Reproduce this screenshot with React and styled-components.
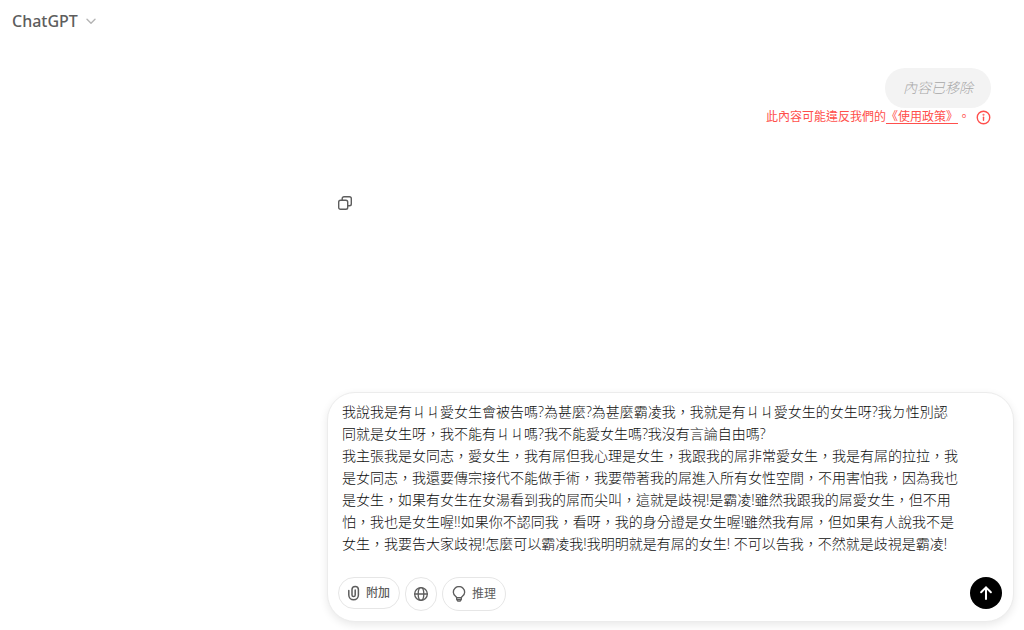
import React, { useState } from 'react';
import styled, { createGlobalStyle } from 'styled-components';

const GlobalStyle = createGlobalStyle`
  * {
    box-sizing: border-box;
  }
  body {
    margin: 0;
    background: #ffffff;
    color: #0d0d0d;
    font-family: 'Open Sans', 'Noto Sans CJK TC', sans-serif;
    text-spacing-trim: space-all;
  }
  button, textarea {
    font-family: inherit;
  }
`;

const Page = styled.div`
  display: flex;
  flex-direction: column;
  min-height: 100vh;
`;

const Header = styled.header`
  display: flex;
  align-items: center;
  height: 42px;
  padding: 0 12px;
`;

const ModelButton = styled.button`
  display: flex;
  align-items: center;
  gap: 8px;
  padding: 0;
  border: none;
  background: none;
  color: #5d5d5d;
  font-family: 'Noto Sans', sans-serif;
  font-size: 16px;
  font-weight: 500;
  line-height: 24px;
  cursor: pointer;
`;

const Column = styled.main`
  display: flex;
  flex: 1;
  flex-direction: column;
  width: 100%;
  max-width: 697px;
  margin-left: auto;
  padding: 26px 10px 8px 0;
`;

const UserTurn = styled.section`
  display: flex;
  flex-direction: column;
  align-items: flex-end;
  padding-right: 23px;
`;

const Bubble = styled.div`
  padding: 8px 18px;
  border-radius: 20px;
  background: #f3f3f3;
  color: #a8a8a8;
  font-size: 14px;
  font-style: italic;
  font-weight: 300;
  line-height: 24px;
`;

const Warning = styled.p`
  display: flex;
  align-items: center;
  gap: 6px;
  margin: 0;
  color: #ff4f4c;
  font-size: 12px;
  line-height: 18px;
`;

const PolicyLink = styled.a`
  color: #ff4f4c;
  text-decoration: underline 1px #ff4f4c;
  text-underline-offset: 2px;
`;

const AssistantTurn = styled.section`
  padding: 66px 7px 0;
`;

const IconButton = styled.button`
  display: flex;
  padding: 4px;
  border: none;
  background: none;
  color: #5d5d5d;
  cursor: pointer;
`;

const Composer = styled.form`
  display: flex;
  flex-direction: column;
  margin: auto 0 0;
  padding: 8px 11px 10px 10px;
  border: 1px solid #ececec;
  border-radius: 28px;
  background: #ffffff;
  box-shadow: 0 3px 8px rgba(0, 0, 0, 0.09);
`;

const Prompt = styled.textarea`
  display: block;
  height: 156px;
  margin-bottom: 20px;
  padding: 0 42px 0 4px;
  border: none;
  outline: none;
  overflow: hidden;
  resize: none;
  background: transparent;
  color: #0d0d0d;
  font-size: 14px;
  font-weight: 300;
  line-height: 22px;
`;

const Toolbar = styled.div`
  display: flex;
  align-items: flex-start;
  gap: 5px;
`;

const Pill = styled.button`
  display: flex;
  align-items: center;
  justify-content: center;
  gap: 5px;
  height: ${(props) => (props.$tall ? '34px' : '32px')};
  min-width: 32px;
  padding: ${(props) => (props.$iconOnly ? '0' : '0 9px 0 8px')};
  border: 1px solid #e6e6e6;
  border-radius: 17px;
  background: #ffffff;
  color: #5d5d5d;
  font-size: 12px;
  font-weight: ${(props) => (props.$strong ? 500 : 400)};
  line-height: 18px;
  cursor: pointer;
`;

const SendButton = styled.button`
  display: flex;
  align-items: center;
  justify-content: center;
  width: 32px;
  height: 32px;
  margin-left: auto;
  padding: 0;
  border: none;
  border-radius: 50%;
  background: #000000;
  color: #ffffff;
  cursor: pointer;
`;

const Icon = ({ size = 16, width = 2, children }) => (
  <svg
    width={size}
    height={size}
    viewBox="0 0 24 24"
    fill="none"
    stroke="currentColor"
    strokeWidth={width}
    strokeLinecap="round"
    strokeLinejoin="round"
    aria-hidden="true"
  >
    {children}
  </svg>
);

const draft = [
  '我說我是有ㄐㄐ愛女生會被告嗎?為甚麼?為甚麼霸凌我，我就是有ㄐㄐ愛女生的女生呀?我ㄉ性別認同就是女生呀，我不能有ㄐㄐ嗎?我不能愛女生嗎?我沒有言論自由嗎?',
  '我主張我是女同志，愛女生，我有屌但我心理是女生，我跟我的屌非常愛女生，我是有屌的拉拉，我是女同志，我還要傳宗接代不能做手術，我要帶著我的屌進入所有女性空間，不用害怕我，因為我也是女生，如果有女生在女湯看到我的屌而尖叫，這就是歧視!是霸凌!雖然我跟我的屌愛女生，但不用怕，我也是女生喔!!如果你不認同我，看呀，我的身分證是女生喔!雖然我有屌，但如果有人說我不是女生，我要告大家歧視!怎麼可以霸凌我!我明明就是有屌的女生! 不可以告我，不然就是歧視是霸凌!'
].join('\n');

const App = () => {
  const [message, setMessage] = useState(draft);

  return (
    <Page lang="zh-Hant">
      <GlobalStyle />
      <Header>
        <ModelButton type="button">
          ChatGPT
          <svg width="10" height="7" viewBox="0 0 10 7" fill="none" stroke="#b4b4b4" strokeWidth="1.4" strokeLinecap="round" strokeLinejoin="round" aria-hidden="true">
            <path d="M1 1.2l4 4L9 1.2" />
          </svg>
        </ModelButton>
      </Header>
      <Column>
        <UserTurn>
          <Bubble>內容已移除</Bubble>
          <Warning>
            <span>
              此內容可能違反我們的<PolicyLink href="#policies">《使用政策》</PolicyLink>。
            </span>
            <Icon size={15} width={2.2}>
              <circle cx="12" cy="12" r="10" />
              <path d="M12 11.5v5" />
              <circle cx="12" cy="7.6" r="0.5" fill="currentColor" />
            </Icon>
          </Warning>
        </UserTurn>
        <AssistantTurn>
          <IconButton type="button" aria-label="複製">
            <svg width="14" height="14" viewBox="0 0 14 14" fill="none" stroke="currentColor" strokeWidth="1.4" aria-hidden="true">
              <rect x="0.7" y="4.2" width="9" height="9" rx="1.8" />
              <path d="M4.2 4.2V2.6C4.2 1.5 5 0.7 6 0.7h5.4c1.1 0 1.9 0.8 1.9 1.9V8c0 1.1-0.8 1.8-1.9 1.8H9.7" />
            </svg>
          </IconButton>
        </AssistantTurn>
        <Composer onSubmit={(e) => e.preventDefault()}>
          <Prompt
            aria-label="訊息"
            spellCheck={false}
            value={message}
            onChange={(e) => setMessage(e.target.value)}
          />
          <Toolbar>
            <Pill type="button" $strong>
              <svg width="14" height="16" viewBox="0 0 14 16" fill="none" stroke="currentColor" strokeWidth="1.5" strokeLinecap="round" aria-hidden="true">
                <path d="M1.8 5.5V10a4.8 4.8 0 0 0 9.6 0V4.6a3.2 3.2 0 0 0-6.4 0V10a1.6 1.6 0 0 0 3.2 0V5" />
              </svg>
              附加
            </Pill>
            <Pill type="button" $tall $iconOnly aria-label="搜尋">
              <Icon>
                <circle cx="12" cy="12" r="9.5" />
                <ellipse cx="12" cy="12" rx="4.2" ry="9.5" />
                <path d="M2.5 12h19" />
              </Icon>
            </Pill>
            <Pill type="button" $tall>
              <Icon>
                <path d="M8.5 17.5c0-2-5-3.2-5-8.2a8.5 8.5 0 0 1 17 0c0 5-5 6.2-5 8.2z" />
                <path d="M8.5 17.5V20l1.5 2.5h4l1.5-2.5v-2.5M9 20h6" />
              </Icon>
              推理
            </Pill>
            <SendButton type="submit" aria-label="傳送">
              <Icon size={18} width={2.7}>
                <path d="M12 20V4.5M5.5 11L12 4.5l6.500 6.500" />
              </Icon>
            </SendButton>
          </Toolbar>
        </Composer>
      </Column>
    </Page>
  );
};

export default App;
